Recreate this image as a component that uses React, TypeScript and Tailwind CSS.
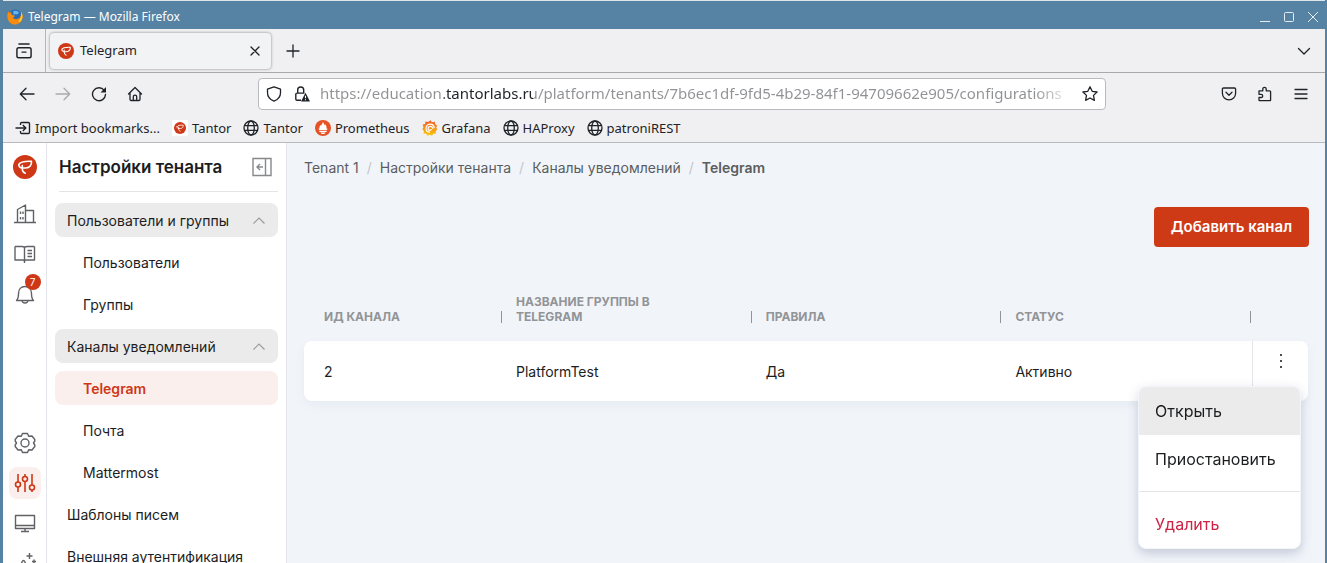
import type { ReactNode } from "react";
import clsx from "clsx";

type IconProps = {
  className?: string;
};

const TantorLogo = ({ className }: IconProps) => (
  <svg viewBox="0 0 24 24" className={className} aria-hidden="true">
    <circle cx="12" cy="12" r="12" fill="#cf3816" />
    <path
      d="M5.800 9.500C7.500 6.500 12 6 18.500 6.300c.2 3.900-1.800 6.700-5.800 6.700H9.300M5.800 9.500c0 2 1.200 3.300 3.500 3.500M9.300 10.500V14c0 2 1 3.500 3 4.200"
      fill="none"
      stroke="#fff"
      strokeWidth="1.600"
      strokeLinecap="round"
      strokeLinejoin="round"
    />
  </svg>
);

const FirefoxLogo = ({ className }: IconProps) => (
  <svg viewBox="0 0 16 16" className={className} aria-hidden="true">
    <circle cx="8" cy="7" r="6.500" fill="#2a6cb5" />
    <path d="M6 2.500c2-1.500 5-.8 6 1.500l-2 1.500-2-.5-1 1.500z" fill="#67b7ea" />
    <path
      d="M1.500 2.500C-.6 6 0 11.500 3.600 14.200c4.400 3 11 .8 12-5.200.4-2.300-.3-4.700-1.600-6 .3 3.500-.7 5.600-3 6.800-2.500 1-4.500.1-5-1.300l2-1.300c-1-.8-2.200-1.400-3-1.200C4 5 4 4 4.500 3.200c-1.100.2-1.700.3-2 .8z"
      fill="#f98c0e"
    />
    <path d="M14 3c2 2.500 2 7-.6 9.600-1 .6-2 .2-2-.6C14 10 14.500 6.500 14 3z" fill="#fbc93d" />
  </svg>
);

const GlobeIcon = ({ className }: IconProps) => (
  <svg viewBox="0 0 16 16" className={className} fill="none" stroke="currentColor" strokeWidth="1.300" aria-hidden="true">
    <circle cx="8" cy="8" r="7" />
    <ellipse cx="8" cy="8" rx="3.300" ry="7" />
    <path d="M1.500 5.700h13M1.500 10.300h13" />
  </svg>
);

const ImportIcon = ({ className }: IconProps) => (
  <svg viewBox="0 0 16 16" className={className} fill="none" stroke="currentColor" strokeWidth="1.400" aria-hidden="true">
    <path d="M5.500 5V3.700c0-.7.500-1.200 1.200-1.200h6.600c.7 0 1.200.5 1.200 1.200v8.600c0 .7-.5 1.200-1.200 1.200H6.700c-.7 0-1.200-.5-1.200-1.200V11M.5 8h10M7.800 5l3 3-3 3" />
  </svg>
);

const PrometheusIcon = ({ className }: IconProps) => (
  <svg viewBox="0 0 16 16" className={className} aria-hidden="true">
    <circle cx="8" cy="8" r="8" fill="#e75225" />
    <path
      d="M8 1.800c.3 1.600 1.500 2 1.400 3.600.5-.3.600-.9.600-1.300 1.400 1.600 1.800 3.300 1.500 4.600l1.100-.3c-.2.700-.6 1.200-1 1.600H4.400c-.4-.4-.8-.9-1-1.600l1.100.3C4.200 7.400 4.700 6 5.700 5c0 .5.100.9.500 1.100C6.300 4.300 7.600 3.600 8 1.800zM4.300 10.700h7.400v1.200H4.300zM5.500 12.500h5c-.4 1-1.400 1.500-2.500 1.500s-2.100-.5-2.500-1.500z"
      fill="#fff"
    />
  </svg>
);

const GrafanaIcon = ({ className }: IconProps) => (
  <svg viewBox="0 0 16 16" className={className} aria-hidden="true">
    <defs>
      <linearGradient id="grafana" x1="0" y1="0" x2="0" y2="1">
        <stop offset="0" stopColor="#f05a28" />
        <stop offset="1" stopColor="#fbca0a" />
      </linearGradient>
    </defs>
    <path
      d="M8.500.2l1.400 2 3-.5.300 2.600 2 1.200-.9 2 1 2-1.500 1.600.2 2.400-2.600.3-1.500 2-2.200-1-2.400 1-1.200-2.200-2.500-.2.300-2.500L.4 9.300l1-2.100-.7-2.600 2.400-.7.300-2.300 2.700.5z"
      fill="url(#grafana)"
    />
    <path
      d="M12.200 8.300c0-2.500-1.700-4.200-4-4.200C5.800 4.100 4 6 4 8.300c0 2.200 1.600 3.900 3.900 3.900M10.700 8.700c0-1.400-1-2.400-2.400-2.400-1.300 0-2.200 1-2.200 2.100 0 1.200.9 1.900 1.900 1.900.9 0 1.400-.6 1.400-1.200"
      fill="none"
      stroke="#fff"
      strokeWidth="1.200"
    />
  </svg>
);

const chromeIcons = {
  view: "M3.500 1.800h9M3.300 5.200h9.400c.9 0 1.600.7 1.600 1.600v5.600c0 .9-.7 1.600-1.600 1.600H3.300c-.9 0-1.600-.7-1.600-1.600V6.800c0-.9.700-1.600 1.600-1.600zM6.300 9h3.400",
  back: "M15 8H1.500M7 2.200L1.300 8 7 13.800",
  forward: "M1 8h13.500M9 2.200L14.700 8 9 13.800",
  home: "M1.500 8L8 1.500 14.500 8M3 7v6.300c0 .7.500 1.200 1.200 1.200h7.600c.7 0 1.200-.5 1.200-1.200V7M6.300 14.500v-3.800c0-2.200 3.400-2.200 3.400 0v3.800",
  shield: "M8 .8l6.500 2.300v3.700c0 4-2.800 6.900-6.500 8.400-3.700-1.500-6.500-4.400-6.500-8.400V3.100z",
  star: "M8 .8l2.200 4.500 4.900.7-3.600 3.400.9 4.900L8 12l-4.400 2.300.9-4.900L.9 6l4.900-.7z",
  pocket: "M2.500 2h11c.6 0 1.100.5 1.100 1.100v4.200c0 3.700-3 6.600-6.600 6.600S1.400 11 1.400 7.300V3.100c0-.6.500-1.100 1.100-1.100zM5 6.300l3 2.900 3-2.900",
  puzzle: "M2 6.500V4.800h3.800V3c0-2.300 3.400-2.300 3.400 0v1.800h3.400c.6 0 1 .4 1 1v8.400c0 .3-.2.500-.5.500H2.500c-.3 0-.5-.2-.5-.5V11.500h2.200c2 0 2-3.200 0-3.200H2z",
  menu: "M2 3.500h12M2 8h12M2 12.500h12",
  chevron: "M2.500 5.500L8 11l5.500-5.500",
  plus: "M8 2v12M2 8h12",
  close: "M4 4l8 8M12 4l-8 8",
};

const ChromeIcon = ({ name, className = "size-4" }: { name: keyof typeof chromeIcons; className?: string }) => (
  <svg
    viewBox="0 0 16 16"
    className={className}
    fill="none"
    stroke="currentColor"
    strokeWidth="1.300"
    strokeLinecap="round"
    strokeLinejoin="round"
    aria-hidden="true"
  >
    <path d={chromeIcons[name]} />
  </svg>
);

const ReloadIcon = () => (
  <svg viewBox="0 0 16 16" className="size-4" fill="none" stroke="currentColor" strokeWidth="1.400" aria-hidden="true">
    <path d="M13.200 4.300A6.500 6.500 0 1 0 14.500 8.500" strokeLinecap="round" />
    <path d="M15 1v5.500H9.500z" fill="currentColor" stroke="none" />
  </svg>
);

const LockWarningIcon = () => (
  <svg viewBox="0 0 16 16" className="size-4" aria-hidden="true">
    <path
      d="M7 14.300H3c-.7 0-1.200-.5-1.200-1.200V8.300c0-.7.500-1.200 1.200-1.200h7.500M3.700 7V4c0-4 6-4 6 0v3"
      fill="none"
      stroke="currentColor"
      strokeWidth="1.400"
    />
    <path d="M11.500 6.800L16 15.500H7z" fill="currentColor" />
    <path d="M11.500 9.700v2.600M11.500 13.200v1.100" stroke="#fff" strokeWidth="1.100" />
  </svg>
);

const WindowButton = ({ label, children }: { label: string; children: ReactNode }) => (
  <button type="button" aria-label={label} className="flex size-6 items-center justify-center">
    <svg viewBox="0 0 12 12" className="size-3" fill="none" stroke="#e6edf2" aria-hidden="true">
      {children}
    </svg>
  </button>
);

const ToolbarButton = ({ label, className, children }: { label: string; className?: string; children: ReactNode }) => (
  <button type="button" aria-label={label} className={clsx("flex h-8 w-9 items-center justify-center", className)}>
    {children}
  </button>
);

const bookmarks = [
  { id: 1, title: "Tantor", icon: <TantorLogo className="size-4 bg-white p-[2px]" /> },
  { id: 2, title: "Tantor", icon: <GlobeIcon className="size-4" /> },
  { id: 3, title: "Prometheus", icon: <PrometheusIcon className="size-4" /> },
  { id: 4, title: "Grafana", icon: <GrafanaIcon className="size-4" /> },
  { id: 5, title: "HAProxy", icon: <GlobeIcon className="size-4" /> },
  { id: 6, title: "patroniREST", icon: <GlobeIcon className="size-4" /> },
];

function BrowserChrome() {
  return (
    <header className="shrink-0 bg-[#f0f0f2] font-['Noto_Sans',sans-serif] text-[13px] text-[#1f2328]">
      <div className="flex h-[29px] items-center gap-[5px] border-t border-[#dfe6ea] bg-[#5682a3] pt-1 pl-1 text-xs text-white">
        <FirefoxLogo className="size-4" />
        <span>Telegram — Mozilla Firefox</span>
        <div className="ml-auto flex">
          <WindowButton label="Свернуть">
            <path d="M1 10.500h10" />
          </WindowButton>
          <WindowButton label="Развернуть">
            <rect x="1.500" y="1.500" width="9" height="9" rx="1" />
          </WindowButton>
          <WindowButton label="Закрыть">
            <path d="M1 1l10 10M11 1L1 11" />
          </WindowButton>
        </div>
      </div>

      <div className="flex h-11 items-center border-b border-[#a9a9ad] pr-[3px]">
        <button type="button" aria-label="Обзор вкладок" className="flex h-full w-[43px] items-center justify-center border-r border-[#b5b5b8]">
          <ChromeIcon name="view" className="size-[18px]" />
        </button>
        <div className="ml-1 flex h-9 w-[221px] items-center rounded bg-[#f2f3f5] px-2 shadow-[0_0_3px_rgba(0,0,0,0.450)]">
          <TantorLogo className="size-4" />
          <span className="ml-[6px] grow">Telegram</span>
          <button type="button" aria-label="Закрыть вкладку">
            <ChromeIcon name="close" className="size-4" />
          </button>
        </div>
        <ToolbarButton label="Новая вкладка" className="ml-1">
          <ChromeIcon name="plus" />
        </ToolbarButton>
        <ToolbarButton label="Все вкладки" className="ml-auto">
          <ChromeIcon name="chevron" />
        </ToolbarButton>
      </div>

      <div className="flex h-[41px] items-center px-[6px]">
        <ToolbarButton label="Назад">
          <ChromeIcon name="back" />
        </ToolbarButton>
        <ToolbarButton label="Вперёд" className="text-[#a8a9ac]">
          <ChromeIcon name="forward" />
        </ToolbarButton>
        <ToolbarButton label="Обновить">
          <ReloadIcon />
        </ToolbarButton>
        <ToolbarButton label="Домой">
          <ChromeIcon name="home" />
        </ToolbarButton>
        <div className="mx-[105px] flex h-8 min-w-0 grow items-center rounded border border-[#b9babd] bg-white px-[7px]">
          <ChromeIcon name="shield" />
          <span className="ml-3">
            <LockWarningIcon />
          </span>
          <input
            type="text"
            aria-label="Адрес"
            readOnly
            value="https://education.tantorlabs.ru/platform/tenants/7b6ec1df-9fd5-4b29-84f1-94709662e905/configurations"
            className="mr-2 ml-[10px] min-w-0 grow bg-[linear-gradient(90deg,#909194_124px,#1f2328_124px,#1f2328_213px,#909194_213px,#909194_715px,#ffffff_755px)] bg-clip-text text-[15px] text-transparent outline-none"
          />
          <ChromeIcon name="star" />
        </div>
        <ToolbarButton label="Pocket">
          <ChromeIcon name="pocket" />
        </ToolbarButton>
        <ToolbarButton label="Расширения">
          <ChromeIcon name="puzzle" />
        </ToolbarButton>
        <ToolbarButton label="Меню">
          <ChromeIcon name="menu" />
        </ToolbarButton>
      </div>

      <nav aria-label="Закладки" className="flex h-[29px] items-center gap-3 border-b border-[#b9babd] pl-3">
        <a href="#import" className="flex items-center gap-1">
          <ImportIcon className="size-4" />
          Import bookmarks...
        </a>
        {bookmarks.map((bookmark) => (
          <a key={bookmark.id} href="#bookmark" className="flex items-center gap-1">
            {bookmark.icon}
            {bookmark.title}
          </a>
        ))}
      </nav>
    </header>
  );
}

const railIcons = {
  tenants: "M1 20.500h22M4.500 20.500V7.500L12.500 3v17.500M12.500 8.500h8v12M7.500 9.500v2.500M10 9.500v2.500M7.500 15v2.500M10 15v2.500",
  docs: "M2 4.500h7c1.500 0 2.500.6 2.500 1.500v15M21.500 4.500h-7c-1.500 0-3 .6-3 1.500M2 4.500v13.500h8c1 0 1.500.5 1.500 1.500 0-1 .5-1.500 1.500-1.500h8.500V4.500M14.500 8.500h4.500M14.500 11.500h4.500M14.500 14.500h4.500",
  bell: "M3.500 18.500c2-2 2-4 2-7 0-4 2.500-7 6.500-7s6.500 3 6.500 7c0 3 0 5 2 7zM9 18.500c.3 3.300 5.700 3.300 6 0",
  settings:
    "M9.500 2.500h5l1.200 2.800 3.300-.3 2.800 3.500v1.500L20.500 12l1.300 2v1.500L19 19l-3.300-.3-1.200 2.800h-5l-1.200-2.800L5 19l-2.800-3.500V14l1.300-2-1.300-2V8.500L5 5l3.300.3zM12 8a4 4 0 1 0 0 8 4 4 0 0 0 0-8z",
  monitor: "M2.500 4.500h19v13h-19zM2.500 14.500h19M12 17.500v3M8 20.500h8",
  insights: "M1 21l5-2 3-8c1-2 2-2 3 0l3 8 4 3M16.500 2v6M13.500 5h6M21 8.500v4M19 10.500h4",
};

const RailButton = ({ label, icon }: { label: string; icon: keyof typeof railIcons }) => (
  <button type="button" aria-label={label} className="flex size-8 shrink-0 items-center justify-center text-[#5f6164]">
    <svg
      viewBox="0 0 24 24"
      className="size-6"
      fill="none"
      stroke="currentColor"
      strokeWidth="1.400"
      strokeLinejoin="round"
      aria-hidden="true"
    >
      <path d={railIcons[icon]} />
    </svg>
  </button>
);

function Rail() {
  return (
    <nav aria-label="Разделы" className="flex w-11 shrink-0 flex-col items-center gap-2 border-r border-[#e4e5ec] bg-white pt-3">
      <a href="#home" aria-label="Tantor" className="mb-[11px]">
        <TantorLogo className="size-6" />
      </a>
      <RailButton label="Тенанты" icon="tenants" />
      <RailButton label="Документация" icon="docs" />
      <div className="relative">
        <RailButton label="Уведомления" icon="bell" />
        <span className="absolute -top-1 left-4 flex size-4 items-center justify-center rounded-full bg-[#cf3816] text-[10px] text-white">
          7
        </span>
      </div>
      <div className="mt-[109px] flex flex-col gap-2">
        <RailButton label="Настройки" icon="settings" />
        <button
          type="button"
          aria-label="Настройки тенанта"
          className="flex size-8 shrink-0 items-center justify-center rounded-lg bg-[#fbefed] text-[#cf3816]"
        >
          <svg viewBox="0 0 24 24" className="size-6" fill="none" stroke="currentColor" strokeWidth="1.600" aria-hidden="true">
            <path d="M5 3v8M5 16v5M12 3v2.500M12 10.500v10.500M19 3v11M19 19v2" />
            <circle cx="5" cy="13.500" r="2.500" />
            <circle cx="12" cy="8" r="2.500" />
            <circle cx="19" cy="16.500" r="2.500" />
          </svg>
        </button>
        <RailButton label="Мониторинг" icon="monitor" />
        <RailButton label="Советы" icon="insights" />
      </div>
    </nav>
  );
}

type MenuEntry = {
  title: string;
  kind: "group" | "child" | "root";
  active?: boolean;
};

const menu: MenuEntry[] = [
  { title: "Пользователи и группы", kind: "group" },
  { title: "Пользователи", kind: "child" },
  { title: "Группы", kind: "child" },
  { title: "Каналы уведомлений", kind: "group" },
  { title: "Telegram", kind: "child", active: true },
  { title: "Почта", kind: "child" },
  { title: "Mattermost", kind: "child" },
  { title: "Шаблоны писем", kind: "root" },
  { title: "Внешняя аутентификация", kind: "root" },
];

function Sidebar() {
  return (
    <aside className="flex w-60 shrink-0 flex-col border-r border-[#e4e5ec] bg-white px-2">
      <div className="ml-1 flex h-[49px] shrink-0 items-center justify-between border-b border-[#e4e5e8] pr-[6px]">
        <h2 className="text-[17px] font-semibold whitespace-nowrap">Настройки тенанта</h2>
        <button type="button" aria-label="Свернуть меню">
          <svg viewBox="0 0 20 20" className="size-5" fill="none" stroke="#86888b" strokeWidth="1.400" aria-hidden="true">
            <path d="M1 1.500h18v17H1zM13.500 1.500v17M11 10H5M8 7l-3 3 3 3" />
          </svg>
        </button>
      </div>
      <ul className="mt-[11px] flex flex-col gap-2">
        {menu.map((entry) => (
          <li key={entry.title}>
            {entry.kind === "group" ? (
              <button
                type="button"
                aria-expanded="true"
                className="flex h-[34px] w-full items-center justify-between rounded-lg bg-[#ebebeb] px-3 pt-px whitespace-nowrap"
              >
                {entry.title}
                <svg viewBox="0 0 14 14" className="size-[14px]" fill="none" stroke="#9a9b9e" strokeWidth="1.200" aria-hidden="true">
                  <path d="M1.500 9.500L7 4l5.500 5.500" />
                </svg>
              </button>
            ) : (
              <a
                href="#section"
                className={clsx(
                  "flex h-[34px] items-center rounded-lg pt-px whitespace-nowrap",
                  entry.kind === "child" ? "pl-7" : "pl-3",
                  entry.active && "bg-[#fbefed] font-semibold text-[#cf3816]",
                )}
              >
                {entry.title}
              </a>
            )}
          </li>
        ))}
      </ul>
    </aside>
  );
}

const crumbs = ["Tenant 1", "Настройки тенанта", "Каналы уведомлений"];
const columns = ["ИД канала", "Название группы в Telegram", "Правила", "Статус"];

function RowMenu() {
  return (
    <div
      role="menu"
      className="absolute top-[45px] right-[7px] z-10 w-[163px] overflow-hidden rounded-lg border border-[#f4f5f8] bg-white text-base shadow-[0_4px_12px_rgba(40,50,100,0.180)]"
    >
      <button type="button" role="menuitem" className="block h-12 w-full bg-[#ebebeb] px-4 text-left">
        Открыть
      </button>
      <button type="button" role="menuitem" className="block h-12 w-full px-4 text-left">
        Приостановить
      </button>
      <hr className="my-2 border-[#e4e5e8]" />
      <button type="button" role="menuitem" className="block h-12 w-full px-4 text-left text-[#cc2244]">
        Удалить
      </button>
    </div>
  );
}

function Channels() {
  return (
    <main className="min-w-0 grow bg-[#f1f5fa] pr-4 pl-[17px]">
      <nav aria-label="Навигация" className="pt-[14px] text-[#5b5d60]">
        <ol className="flex h-[22px] items-center">
          {crumbs.map((crumb) => (
            <li key={crumb} className="flex">
              <a href="#crumb">{crumb}</a>
              <span className="mx-2 text-[#c3c6cb]">/</span>
            </li>
          ))}
          <li className="font-semibold">Telegram</li>
        </ol>
      </nav>

      <div className="mt-7 flex justify-end">
        <button type="button" className="h-10 rounded bg-[#cf3a16] px-[17px] text-[15px] font-semibold text-white">
          Добавить канал
        </button>
      </div>

      <div className="mt-[47px] pr-px">
        <table className="w-full table-fixed border-separate border-spacing-0 text-left">
          <colgroup>
            <col className="w-[196px]" />
            <col />
            <col />
            <col />
            <col className="w-[59px]" />
          </colgroup>
          <thead>
            <tr className="text-xs leading-[15px] text-[#929497] uppercase">
              {columns.map((column) => (
                <th key={column} className="pb-[17px] pl-4 align-bottom font-bold first:pl-5">
                  <div className="-mr-[2px] flex items-end justify-between">
                    <span className="max-w-40">{column}</span>
                    <span className="mb-px h-3 w-px bg-[#929497]" />
                  </div>
                </th>
              ))}
              <th aria-label="Действия" />
            </tr>
          </thead>
          <tbody>
            <tr className="h-[60px] drop-shadow-[0_4px_4px_rgba(40,50,90,0.050)] [&>td]:bg-white">
              <td className="rounded-l-lg pt-px pl-5">2</td>
              <td className="pt-px pl-4">PlatformTest</td>
              <td className="pt-px pl-4">Да</td>
              <td className="pt-px pl-4">Активно</td>
              <td className="relative rounded-r-lg pl-[3px] align-top">
                <div className="h-[60px] border-l border-[#e4e5e8] text-center">
                  <button
                    type="button"
                    aria-label="Действия с каналом"
                    aria-haspopup="menu"
                    className="inline-flex size-10 items-center justify-center"
                  >
                    <svg viewBox="0 0 4 16" className="h-4 w-1" fill="#4b4d50" aria-hidden="true">
                      <path d="M1 1h2v2H1zM1 7h2v2H1zM1 13h2v2H1z" />
                    </svg>
                  </button>
                </div>
                <RowMenu />
              </td>
            </tr>
          </tbody>
        </table>
      </div>
    </main>
  );
}

export default function App() {
  return (
    <div className="flex h-screen flex-col overflow-hidden border-r-2 border-l-[3px] border-[#5682a3] font-['Inter',sans-serif] text-sm text-[#1c1d1f]">
      <BrowserChrome />
      <div className="flex min-h-0 grow">
        <Rail />
        <Sidebar />
        <Channels />
      </div>
    </div>
  );
}
